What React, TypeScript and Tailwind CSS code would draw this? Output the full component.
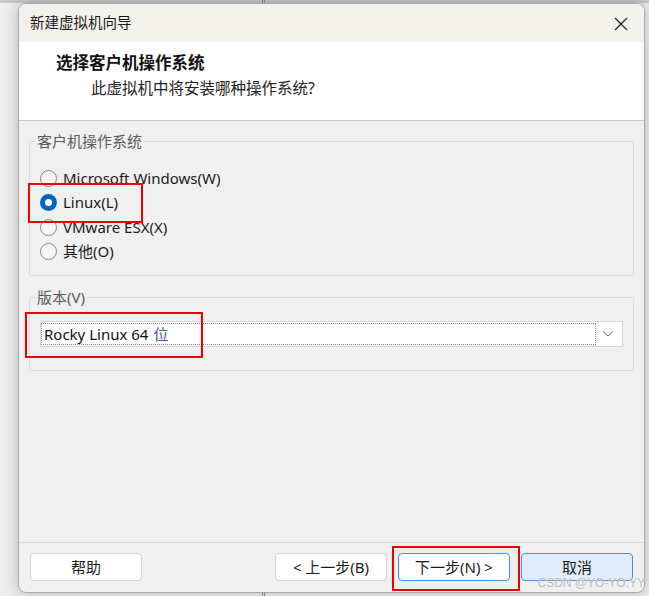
import React from "react";

const cjk = "font-['Noto_Sans','Noto_Sans_CJK_SC',sans-serif]";

function Radio({ label, checked }: { label: string; checked?: boolean }) {
  return (
    <div className="flex items-center h-[24.5px]">
      {checked ? (
        <span className="w-[17px] h-[17px] rounded-full bg-[#0067c0] flex items-center justify-center shrink-0">
          <span className="w-[7px] h-[7px] rounded-full bg-white" />
        </span>
      ) : (
        <span className="w-[17px] h-[17px] rounded-full border border-[#858585] bg-[#f4f4f4] shrink-0" />
      )}
      <span className="ml-[6px] text-[15px] text-[#1b1b1b] leading-none">{label}</span>
    </div>
  );
}

function GroupBox({
  title,
  className,
  children,
}: {
  title: string;
  className?: string;
  children: React.ReactNode;
}) {
  return (
    <div className={"relative border border-[#dcdcdc] rounded-[2px] " + (className ?? "")}>
      <span className="absolute left-[6px] top-[-11px] px-[1px] bg-[#f0f0f0] text-[15px] leading-[20px] text-[#5a5a5a]">
        {title}
      </span>
      {children}
    </div>
  );
}

function Button({
  children,
  variant = "normal",
}: {
  children: React.ReactNode;
  variant?: "normal" | "focus" | "default";
}) {
  const styles =
    variant === "default"
      ? "bg-[#e0ecf9] border-[#4a8fdc]"
      : variant === "focus"
      ? "bg-white border-[#4a8fdc]"
      : "bg-white border-[#d3d3d3]";
  return (
    <div
      className={
        "w-[112px] h-[28px] rounded-[4px] border flex items-center justify-center text-[15px] text-[#1b1b1b] " +
        styles
      }
    >
      {children}
    </div>
  );
}

export default function App() {
  return (
    <div className={"relative w-[649px] h-[596px] overflow-hidden bg-[#eeeeee] " + cjk}>
      {/* desktop strip behind the dialog */}
      <div className="absolute left-0 top-0 w-full h-[3px] bg-[#c9c9c9]" />
      <div className="absolute left-[262px] top-0 w-[3px] h-[4px] border-x border-[#8a8a8a]" />
      <div className="absolute left-[262px] bottom-0 w-[3px] h-[4px] border-x border-[#8a8a8a]" />

      {/* dialog window */}
      <div className="relative ml-[18px] mt-[3px] w-[627px] h-[590px] rounded-[8px] border border-[#a9a9a9] bg-[#f0f0f0] overflow-hidden shadow-[0_0_16px_rgba(0,0,0,0.25)] flex flex-col">
        {/* title bar */}
        <div className="h-[38px] bg-[#f3f1ec] flex items-center justify-between pl-[11px] pr-[16px] shrink-0">
          <span className="text-[14.5px] text-[#1b1b1b]">新建虚拟机向导</span>
          <svg width="14" height="14" viewBox="0 0 14 14" className="mt-[1px]">
            <path d="M1 1 L13 13 M13 1 L1 13" stroke="#1f1f1f" strokeWidth="1.2" fill="none" />
          </svg>
        </div>

        {/* header */}
        <div className="h-[79px] bg-white border-b border-[#c6c6c6] shrink-0 pt-[10px]">
          <div className="pl-[37px] text-[16.5px] font-bold text-[#111] leading-[22px]">选择客户机操作系统</div>
          <div className="pl-[72px] mt-[3px] text-[15.5px] text-[#222] leading-[22px]">此虚拟机中将安装哪种操作系统?</div>
        </div>

        {/* body */}
        <div className="flex-1 px-[10px] pt-[20px]">
          <GroupBox title="客户机操作系统" className="h-[135px] pl-[10px] pt-[24px]">
            <Radio label="Microsoft Windows(W)" />
            <Radio label="Linux(L)" checked />
            <Radio label="VMware ESX(X)" />
            <Radio label="其他(O)" />
          </GroupBox>

          <GroupBox title="版本(V)" className="mt-[21px] h-[74px] pl-[10px] pr-[10px] pt-[23px]">
            <div className="h-[26px] bg-white border border-[#d6d6d6] flex items-center pl-0 pr-[2px]">
              <div className="flex-1 h-[22px] border border-dotted border-[#8c8c8c] flex items-center pl-[2px] text-[15px] text-[#111]">
                Rocky Linux 64 <span className="ml-[5px] text-[#3a5a8c]">位</span>
              </div>
              <svg width="24" height="12" viewBox="0 0 24 12" className="shrink-0">
                <path d="M7 3.5 L12 8 L17 3.5" stroke="#6a6a6a" strokeWidth="1" fill="none" />
              </svg>
            </div>
          </GroupBox>
        </div>

        {/* footer */}
        <div className="h-[50px] border-t border-[#d8d8d8] shrink-0 flex items-start pt-[10px] pl-[11px] pr-[11px]">
          <Button>帮助</Button>
          <div className="flex-1" />
          <Button>&lt; 上一步(B)</Button>
          <div className="w-[11px]" />
          <Button variant="focus">下一步(N) &gt;</Button>
          <div className="w-[11px]" />
          <Button variant="default">取消</Button>
        </div>
      </div>

      {/* red annotation boxes */}
      <div className="absolute left-[28px] top-[183px] w-[115px] h-[40px] border-2 border-[#f00000]" />
      <div className="absolute left-[25px] top-[312px] w-[178px] h-[46px] border-2 border-[#f00000]" />
      <div className="absolute left-[392px] top-[546px] w-[128px] h-[45px] border-2 border-[#f00000]" />

      {/* watermark */}
      <div className="absolute right-[4px] top-[576px] text-[12px] leading-[14px] text-[#b9b9b9] font-['Liberation_Sans',sans-serif] [text-shadow:0_0_2px_#fff]">
        CSDN @YO-YO.YY
      </div>
    </div>
  );
}
